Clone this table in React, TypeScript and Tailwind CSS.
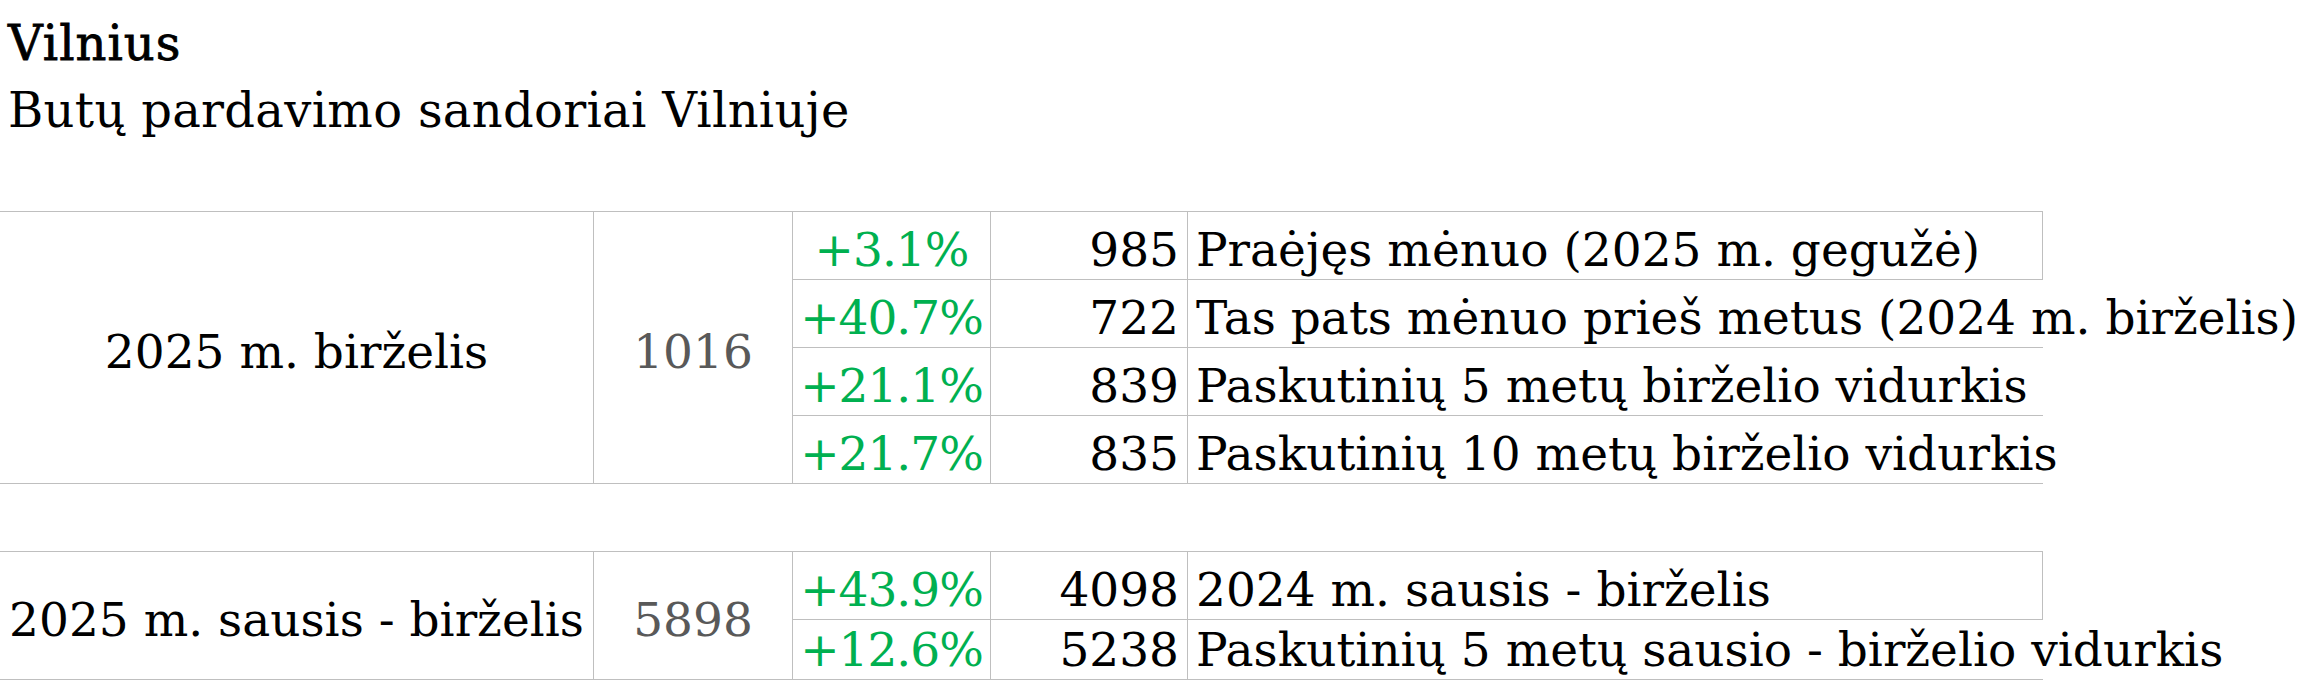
import clsx from "clsx";

/* ---------- Data ---------- */

type Row = { pct: string; value: string; label: string; height?: string };

const monthRows: Row[] = [
  { pct: "+3.1%", value: "985", label: "Praėjęs mėnuo (2025 m. gegužė)" },
  { pct: "+40.7%", value: "722", label: "Tas pats mėnuo prieš metus (2024 m. birželis)" },
  { pct: "+21.1%", value: "839", label: "Paskutinių 5 metų birželio vidurkis" },
  { pct: "+21.7%", value: "835", label: "Paskutinių 10 metų birželio vidurkis" },
];

const halfRows: Row[] = [
  { pct: "+43.9%", value: "4098", label: "2024 m. sausis - birželis" },
  { pct: "+12.6%", value: "5238", label: "Paskutinių 5 metų sausio - birželio vidurkis", height: "h-[60px]" },
];

/* ---------- Table ---------- */

function StatTable({ period, total, rows }: { period: string; total: string; rows: Row[] }) {
  return (
    <div className="flex w-[2043px] border-y border-[#bfbfbf]">
      <div className="flex w-[593px] shrink-0 items-center justify-center whitespace-nowrap pt-[8px] leading-[56px]">
        {period}
      </div>
      <div className="flex w-[199px] shrink-0 items-center justify-center border-l border-[#bfbfbf] pt-[8px] leading-[56px] text-[#595959]">
        {total}
      </div>
      <div className="flex min-w-0 flex-1 flex-col border-l border-[#bfbfbf]">
        {rows.map((r, i) => (
          <div
            key={r.label}
            className={clsx(
              "flex",
              i === 0 ? "h-[67px]" : clsx("border-t border-[#bfbfbf]", r.height ?? "h-[68px]")
            )}
          >
            <div className="flex w-[197px] shrink-0 items-end justify-center pb-px leading-[56px] tracking-[-1px] text-[#00b050]">
              {r.pct}
            </div>
            <div className="flex w-[197px] shrink-0 items-end justify-end border-l border-[#bfbfbf] pb-px pr-[8px] leading-[56px]">
              {r.value}
            </div>
            <div
              className={clsx(
                "flex min-w-0 flex-1 items-end whitespace-nowrap border-l border-[#bfbfbf] pb-px pl-[8px] leading-[56px]",
                i === 0 && "border-r"
              )}
            >
              {r.label}
            </div>
          </div>
        ))}
      </div>
    </div>
  );
}

/* ---------- Page ---------- */

export default function App() {
  return (
    <main className="min-h-screen bg-white font-['DejaVu_Serif',serif] text-[47px] text-black">
      <header className="px-[8px] pb-[67px] pt-[10px] text-[48px] leading-[67px]">
        <h1 className="tracking-[1px] [-webkit-text-stroke:0.8px_black]">Vilnius</h1>
        <p className="tracking-[0.3px]">Butų pardavimo sandoriai Vilniuje</p>
      </header>

      <StatTable period="2025 m. birželis" total="1016" rows={monthRows} />
      <div className="h-[67px]" />
      <StatTable period="2025 m. sausis - birželis" total="5898" rows={halfRows} />
    </main>
  );
}
